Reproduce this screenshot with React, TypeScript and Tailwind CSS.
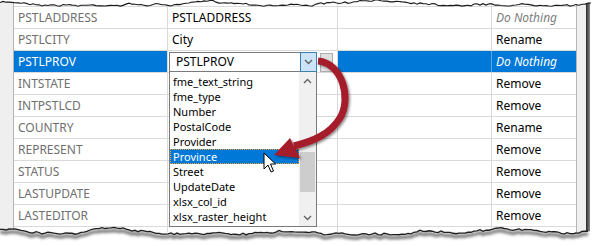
import React from "react";

const rows = [
  { a: "PSTLADDRESS", b: "PSTLADDRESS", d: "Do Nothing", dn: true },
  { a: "PSTLCITY", b: "City", d: "Rename" },
  { a: "PSTLPROV", b: "", d: "Do Nothing", dn: true, sel: true },
  { a: "INTSTATE", b: "", d: "Remove" },
  { a: "INTPSTLCD", b: "", d: "Remove" },
  { a: "COUNTRY", b: "", d: "Rename" },
  { a: "REPRESENT", b: "", d: "Remove" },
  { a: "STATUS", b: "", d: "Remove" },
  { a: "LASTUPDATE", b: "", d: "Remove" },
  { a: "LASTEDITOR", b: "", d: "Remove" },
];

const items = [
  "fme_text_string",
  "fme_type",
  "Number",
  "PostalCode",
  "Provider",
  "Province",
  "Street",
  "UpdateDate",
  "xlsx_col_id",
  "xlsx_raster_height",
];

function rng(seed: number) {
  let s = seed;
  return () => {
    s = (s * 16807) % 2147483647;
    return (s - 1) / 2147483646;
  };
}

function jagged(seed: number, y0: number, amp: number, x0: number, x1: number) {
  const r = rng(seed);
  const pts: [number, number][] = [];
  let y = y0;
  for (let x = x0; x <= x1; x += 3) {
    y += (r() - 0.5) * amp;
    y = Math.max(y0 - amp * 1.5, Math.min(y0 + amp * 1.5, y));
    pts.push([x, +(y + (r() - 0.5) * 1.2).toFixed(2)]);
  }
  return pts;
}

function TornTop() {
  const pts = jagged(7, 3, 1.8, 0, 592);
  const line = pts.map((p) => p.join(",")).join(" ");
  const poly = `0,0 ${line} 598,0`;
  return (
    <svg className="absolute left-0 top-0" width={598} height={12}>
      <polygon points={poly} fill="#ffffff" />
      <polyline points={line} fill="none" stroke="#1a1a1a" strokeWidth={1.1} />
    </svg>
  );
}

function TornBottom() {
  const pts = jagged(31, 231, 2.4, 0, 590);
  const line = pts.map((p) => p.join(",")).join(" ");
  const shadow = pts.map((p) => `${p[0]},${p[1] + 3}`).join(" ");
  const poly = `0,246 ${line} 598,231 598,246`;
  return (
    <svg className="absolute left-0 top-0" width={598} height={246}>
      <defs>
        <filter id="blur" x="-5%" y="-50%" width="110%" height="200%">
          <feGaussianBlur stdDeviation="1.6" />
        </filter>
      </defs>
      <polygon points={poly} fill="#ffffff" />
      <polyline points={shadow} fill="none" stroke="#6b6b6b" strokeWidth={3} filter="url(#blur)" />
      <polyline points={line} fill="none" stroke="#1e1e1e" strokeWidth={1.3} />
    </svg>
  );
}

function Arrow() {
  return (
    <svg className="absolute left-0 top-0 pointer-events-none" width={598} height={246}>
      <defs>
        <filter id="ash" x="-20%" y="-20%" width="140%" height="140%">
          <feDropShadow dx="1.5" dy="1.5" stdDeviation="1.2" floodColor="#000" floodOpacity="0.45" />
        </filter>
      </defs>
      <g filter="url(#ash)">
        <path
          d="M318 61 C 342 63, 352 98, 340 118 C 330 134, 314 141, 294 146"
          fill="none"
          stroke="#a51b2b"
          strokeWidth={7}
          strokeLinecap="butt"
        />
        <polygon points="274,155 290,138 300,158" fill="#a51b2b" />
      </g>
    </svg>
  );
}

function Cursor() {
  return (
    <svg className="absolute left-[263px] top-[152px]" width={14} height={22}>
      <path
        d="M1 1 L1 17 L5 13 L8 20 L10.5 19 L7.5 12 L12.5 12 Z"
        fill="#ffffff"
        stroke="#000"
        strokeWidth={1}
        strokeLinejoin="round"
      />
    </svg>
  );
}

function Chevron({ up }: { up?: boolean }) {
  return (
    <svg width={9} height={6} viewBox="0 0 9 6">
      <polyline
        points={up ? "1,5 4.5,1.5 8,5" : "1,1 4.5,4.5 8,1"}
        fill="none"
        stroke="#606060"
        strokeWidth={1.3}
      />
    </svg>
  );
}

export default function App() {
  const font = { fontFamily: "'Noto Sans', 'Open Sans', sans-serif" };
  return (
    <div
      className="relative w-[598px] h-[246px] bg-white overflow-hidden text-[12px] leading-none"
      style={font}
    >
      <div className="flex h-[232px]">
        <div className="w-[14px] bg-[#efefef] border-r border-[#b5b5b5]" />
        <div className="flex flex-col w-[562px]">
          <div className="flex h-[7px] border-b border-[#dadada]">
            <div className="w-[154px] border-r border-[#dadada]" />
            <div className="w-[170px] border-r border-[#dadada]" />
            <div className="w-[154px] border-r border-[#dadada]" />
            <div className="w-[84px]" />
          </div>
          {rows.map((r) => (
            <div
              key={r.a}
              className={`flex h-[22px] border-b border-[#dadada] ${r.sel ? "bg-[#0078d7]" : ""}`}
            >
              <div
                className={`w-[154px] border-r border-[#dadada] flex items-center pl-[4px] ${
                  r.sel ? "text-white" : "text-[#6f6f6f]"
                }`}
              >
                {r.a}
              </div>
              <div
                className={`w-[170px] border-r border-[#dadada] flex items-center pl-[4px] text-black ${
                  r.sel ? "bg-white" : ""
                }`}
              >
                {r.b}
              </div>
              <div className={`w-[154px] border-r ${r.sel ? "border-[#5aa5e6]" : "border-[#dadada]"}`} />
              <div
                className={`w-[84px] flex items-center pl-[4px] ${
                  r.dn ? "italic" : ""
                } ${r.sel ? "text-white" : r.dn ? "text-[#7d7d7d]" : "text-black"}`}
              >
                {r.d}
              </div>
            </div>
          ))}
          <div className="flex flex-1">
            <div className="w-[154px] border-r border-[#dadada]" />
            <div className="w-[170px] border-r border-[#dadada]" />
            <div className="w-[154px] border-r border-[#dadada]" />
            <div className="w-[84px]" />
          </div>
        </div>
        <div className="w-[10px] bg-[#efefef] border-l border-[#b5b5b5]" />
        <div className="w-[4px] bg-gradient-to-r from-[#2a2a2a] to-[#8a8a8a]" />
        <div className="w-[8px] bg-white" />
      </div>

      {/* combobox */}
      <div className="absolute left-[169px] top-[52px] w-[148px] h-[20px] bg-white border border-[#7a7a7a] flex">
        <div className="flex-1 flex items-center pl-[6px] text-black">PSTLPROV</div>
        <div className="w-[17px] -my-px -mr-px bg-[#cce4f7] border border-[#3c7fb1] flex items-center justify-center">
          <Chevron />
        </div>
      </div>
      <div className="absolute left-[320px] top-[53px] w-[13px] h-[19px] bg-[#e1e1e1] border border-[#adadad]" />

      {/* dropdown list */}
      <div className="absolute left-[169px] top-[72px] w-[148px] h-[155px] bg-white border border-t-0 border-[#7a7a7a] flex text-[11px]">
        <div className="flex-1 flex flex-col pt-[2px]">
          {items.map((it) => (
            <div
              key={it}
              className={`h-[15px] flex items-center pl-[3px] ${
                it === "Province"
                  ? "bg-[#0078d7] text-white outline-1 outline-dotted outline-[#f0a030] -outline-offset-1"
                  : "text-black"
              }`}
            >
              {it}
            </div>
          ))}
        </div>
        <div className="w-[17px] bg-[#f0f0f0] flex flex-col items-center">
          <div className="h-[17px] flex items-center justify-center">
            <Chevron up />
          </div>
          <div className="h-[63px]" />
          <div className="w-[15px] h-[40px] bg-[#cdcdcd]" />
          <div className="flex-1" />
          <div className="h-[17px] flex items-center justify-center">
            <Chevron />
          </div>
        </div>
      </div>

      <Arrow />
      <Cursor />
      <TornTop />
      <TornBottom />
    </div>
  );
}
